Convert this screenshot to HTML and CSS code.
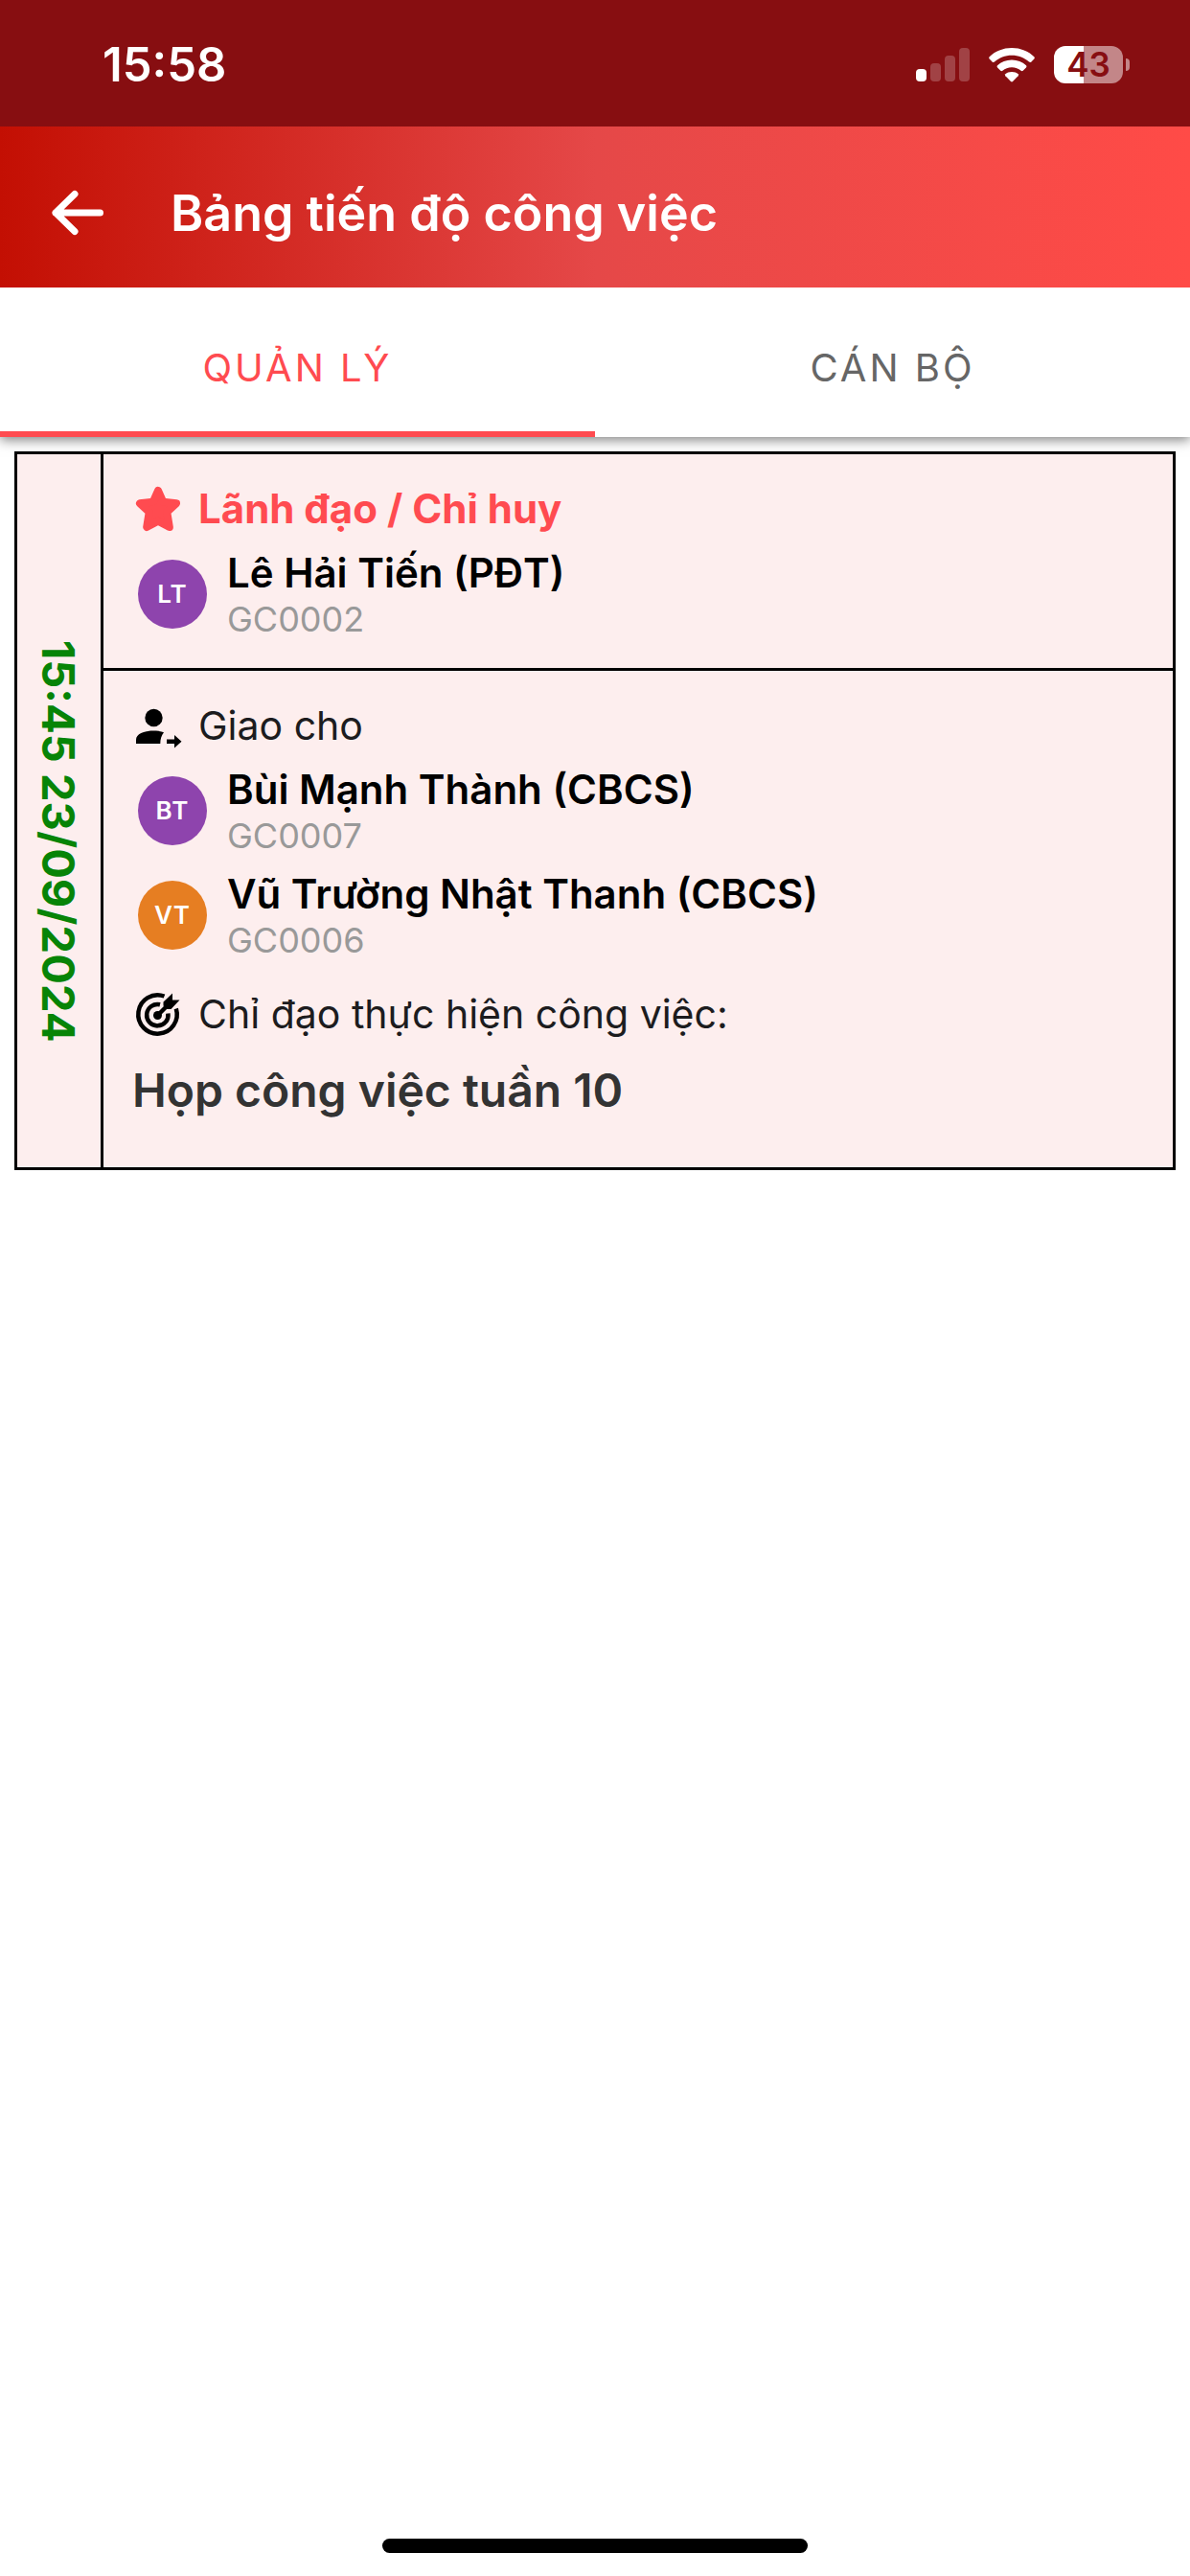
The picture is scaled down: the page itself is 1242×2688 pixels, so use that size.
FILE: index.html
```html
<!DOCTYPE html>
<html lang="vi">
<head>
<meta charset="utf-8">
<meta name="viewport" content="width=device-width, initial-scale=1">
<title>Bảng tiến độ công việc</title>
<link rel="stylesheet" href="styles.css">
</head>
<body>
<div class="status-bar">
  <time class="clock">15:58</time>
  <div class="indicators">
    <svg class="signal" viewBox="0 0 56 36" aria-hidden="true">
      <rect x="0" y="22" width="11" height="13" rx="4" fill="#fff"/>
      <rect x="15" y="16" width="11" height="19" rx="4" fill="#fff" fill-opacity=".22"/>
      <rect x="30" y="8" width="11" height="27" rx="4" fill="#fff" fill-opacity=".22"/>
      <rect x="45" y="0" width="11" height="35" rx="4" fill="#fff" fill-opacity=".22"/>
    </svg>
    <svg class="wifi" viewBox="0 0 48 36" fill="#fff" aria-hidden="true">
      <path d="M24 0C33 0 41.500 3.400 47.300 9.200Q48.300 10.400 47.300 11.500L44.200 14.700Q43.200 15.500 42 14.600C37.200 10.200 31 7.700 24 7.700S10.800 10.200 6 14.600Q4.800 15.500 3.800 14.700L.7 11.500Q-.3 10.400 .7 9.200C6.500 3.400 15 0 24 0Z"/>
      <path d="M24 12.600C29.800 12.600 35 14.700 39 18.300Q40 19.400 39 20.500L35.700 23.800Q34.700 24.600 33.600 23.700C31 21.500 27.700 20.200 24 20.200S17 21.500 14.400 23.700Q13.300 24.600 12.300 23.800L9 20.500Q8 19.400 9 18.300C13 14.700 18.200 12.600 24 12.600Z"/>
      <path d="M24 25C26.800 25 29 25.900 30.600 27.300Q31.500 28.300 30.600 29.300L25 35.100Q24 36 23 35.100L17.400 29.300Q16.500 28.300 17.400 27.300C19 25.900 21.200 25 24 25Z"/>
    </svg>
    <div class="battery"><span class="battery-level">43</span><span class="battery-cap"></span></div>
  </div>
</div>

<header class="app-bar">
  <button class="back" type="button" aria-label="Quay lại">
    <svg viewBox="0 0 54 54" fill="none" stroke="#fff" stroke-width="7" stroke-linecap="round" stroke-linejoin="round" aria-hidden="true"><path d="M50.500 27H4M24 7.500L4 27L24 46.500"/></svg>
  </button>
  <h1 class="title">Bảng tiến độ công việc</h1>
</header>

<nav class="tabs" role="tablist">
  <button class="tab tab-active" type="button" role="tab" aria-selected="true">QUẢN LÝ</button>
  <button class="tab" type="button" role="tab" aria-selected="false">CÁN BỘ</button>
</nav>

<main class="board">
  <article class="task">
    <div class="task-date"><time>15:45 23/09/2024</time></div>
    <div class="task-body">
      <section class="block">
        <h2 class="heading heading-lead">
          <svg class="icon" viewBox="0 0 54 54" fill="#ff4b50" stroke="#ff4b50" stroke-width="8" stroke-linejoin="round" aria-hidden="true"><path d="M27 8L32.200 19.600L46 21.300L36.300 30.300L38.800 46L27 39.800L15.200 46L17.700 30.300L8 21.300L21.800 19.600Z"/></svg>
          Lãnh đạo / Chỉ huy
        </h2>
        <div class="person">
          <span class="avatar">LT</span>
          <div><p class="name">Lê Hải Tiến (PĐT)</p><p class="code">GC0002</p></div>
        </div>
      </section>
      <section class="block block-assign">
        <h2 class="heading">
          <svg class="icon" viewBox="0 0 54 54" aria-hidden="true"><circle cx="22.500" cy="19" r="9.200"/><path d="M4 46V42C4 36 12 32.500 22 32.500C26 32.500 30 33 33 34.200C30.500 37.500 29.300 41 29.300 46Z"/><path d="M36 41.500H44V37L51.500 43.700L44 50.500V46H36Z"/></svg>
          Giao cho
        </h2>
        <div class="person">
          <span class="avatar">BT</span>
          <div><p class="name">Bùi Mạnh Thành (CBCS)</p><p class="code">GC0007</p></div>
        </div>
        <div class="person">
          <span class="avatar avatar-orange">VT</span>
          <div><p class="name">Vũ Trường Nhật Thanh (CBCS)</p><p class="code">GC0006</p></div>
        </div>
        <h2 class="heading heading-task">
          <svg class="icon" viewBox="0 0 54 54" fill="none" stroke="#000" stroke-width="4.500" aria-hidden="true">
            <path d="M33.500 8.500A20.200 20.200 0 1 0 45.800 21.500"/>
            <path d="M29 17.300A11.200 11.200 0 1 0 37.400 26.500"/>
            <path d="M26.500 28.500L37 18"/>
            <circle cx="26.500" cy="28.500" r="4.500" fill="#000" stroke="none"/>
            <path d="M32.500 18.500V14.500L42 5.500V12.500H49.500L40.500 22H36Z" fill="#000" stroke="none"/>
          </svg>
          Chỉ đạo thực hiện công việc:
        </h2>
        <p class="task-title">Họp công việc tuần 10</p>
      </section>
    </div>
  </article>
</main>

<footer class="home"><span class="home-bar"></span></footer>
</body>
</html>
```
FILE: styles.css
```css
* {
  box-sizing: border-box;
}

body {
  margin: 0;
  min-height: 100vh;
  display: flex;
  flex-direction: column;
  background: #fff;
  color: #000;
  font-family: Inter, "Liberation Sans", sans-serif;
}

h1, h2, p {
  margin: 0;
}

button {
  padding: 0;
  border: 0;
  background: none;
  font: inherit;
}

svg {
  display: block;
  flex: none;
}

/* Status bar */
.status-bar {
  display: flex;
  align-items: center;
  justify-content: space-between;
  height: 132px;
  padding: 3px 63px 0 107px;
  background: #870e11;
  color: #fff;
}

.clock {
  font-size: 49px;
  font-weight: 600;
}

.indicators {
  display: flex;
  align-items: center;
  gap: 20px;
}

.signal {
  width: 56px;
  height: 36px;
}

.wifi {
  width: 48px;
  height: 36px;
}

.battery {
  display: flex;
  align-items: center;
  gap: 3px;
}

.battery-level {
  width: 72px;
  height: 39px;
  border-radius: 12px;
  background: linear-gradient(90deg, #fff 43%, #c38688 43%);
  color: #870e11;
  font-size: 35px;
  font-weight: 600;
  line-height: 39px;
  text-align: center;
}

.battery-cap {
  width: 4px;
  height: 13px;
  border-radius: 0 4px 4px 0;
  background: #c38688;
}

/* App bar */
.app-bar {
  display: flex;
  align-items: center;
  gap: 70px;
  height: 168px;
  padding: 12px 54px 0;
  background: linear-gradient(90deg, #c30f03, #e54848 50%, #ff4b47);
  color: #fff;
}

.back svg {
  width: 54px;
  height: 54px;
}

.title {
  font-size: 52px;
  font-weight: 600;
}

/* Tabs: the shadow falls only below the bar */
.tabs {
  display: grid;
  grid-template-columns: 1fr 1fr;
  height: 156px;
  background: #fff;
  box-shadow: 0 3px 12px rgba(0, 0, 0, .5);
  clip-path: inset(0 0 -24px 0);
}

.tab {
  padding-top: 16px;
  border-bottom: 6px solid transparent;
  color: #666;
  font-size: 40px;
  letter-spacing: 3px;
}

.tab-active {
  border-bottom-color: #ff4b50;
  color: #ff4b50;
}

/* Task card */
.board {
  padding: 15px;
}

.task {
  display: grid;
  grid-template-columns: 90px 1fr;
  border: 3px solid #000;
  background: #fdeeee;
}

.task-date {
  display: flex;
  align-items: center;
  justify-content: center;
  padding-top: 64px;
  border-right: 3px solid #000;
  color: #078407;
  font-size: 47px;
  font-weight: 700;
}

.task-date time {
  writing-mode: vertical-rl;
}

.block {
  padding: 30px 30px 27px;
}

.block-assign {
  padding-bottom: 50px;
  border-top: 3px solid #000;
}

.heading {
  display: flex;
  align-items: center;
  gap: 15px;
  margin-bottom: 16px;
  color: #1c1c1e;
  font-size: 41px;
  font-weight: 400;
  line-height: 54px;
}

.heading-lead {
  color: #ff4b50;
  font-size: 42px;
  font-weight: 700;
}

.heading-task {
  margin: 26px 0 23px;
}

.icon {
  width: 54px;
  height: 54px;
}

.person {
  display: flex;
  align-items: flex-start;
  gap: 21px;
}

.person + .person {
  margin-top: 13px;
}

.avatar {
  flex: none;
  width: 72px;
  height: 72px;
  margin: 10px 0 0 6px;
  border-radius: 50%;
  background: #8e44ad;
  color: #fff;
  font-size: 26px;
  font-weight: 600;
  line-height: 72px;
  letter-spacing: 1px;
  text-align: center;
}

.avatar-orange {
  background: #e67e22;
}

.name {
  font-size: 42px;
  font-weight: 600;
  line-height: 48px;
}

.code {
  color: #999;
  font-size: 36px;
  line-height: 48px;
}

.task-title {
  color: #333;
  font-size: 48px;
  font-weight: 600;
  line-height: 60px;
}

/* Home indicator */
.home {
  display: flex;
  justify-content: center;
  margin-top: auto;
  padding-bottom: 24px;
}

.home-bar {
  width: 444px;
  height: 15px;
  border-radius: 8px;
  background: #000;
}
```
